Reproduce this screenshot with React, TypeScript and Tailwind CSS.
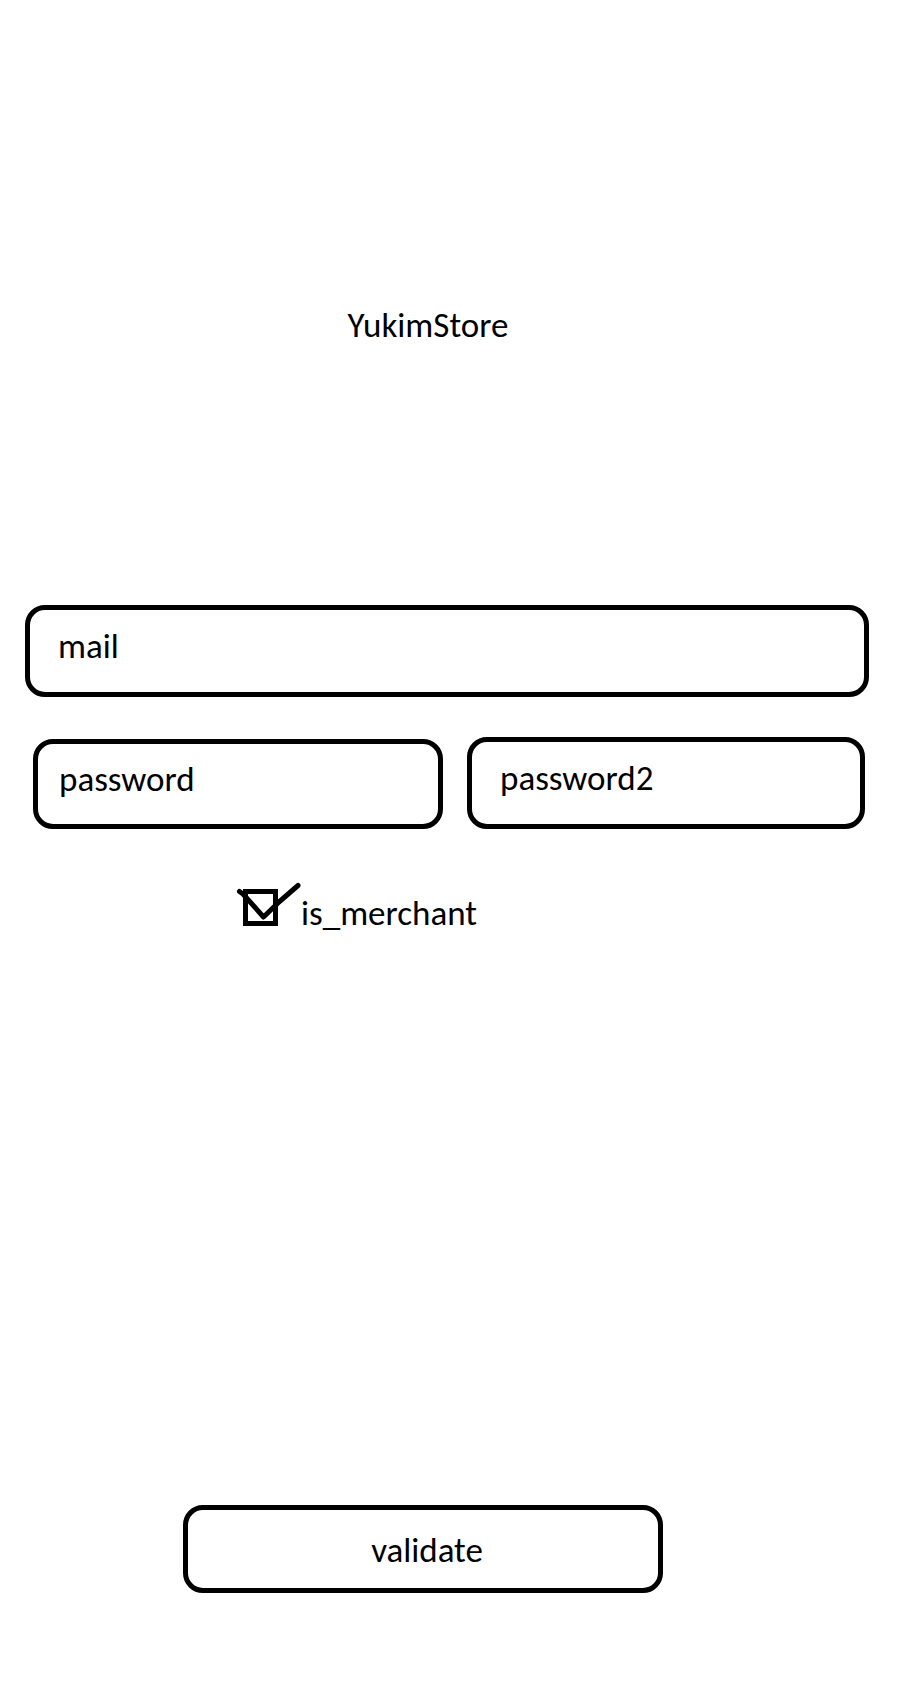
import { useState } from "react";
import type { InputHTMLAttributes } from "react";

function Field({ label, className = "", ...rest }: { label: string } & InputHTMLAttributes<HTMLInputElement>) {
  return (
    <input
      aria-label={label}
      placeholder={label}
      className={`w-full min-w-0 rounded-[20px] border-[5px] border-black bg-white pb-[10px] placeholder:text-black placeholder:opacity-100 focus:outline-none ${className}`}
      {...rest}
    />
  );
}

export default function App() {
  const [merchant, setMerchant] = useState(true);

  return (
    <main className="min-h-screen bg-white pt-[305px] pr-[37px] pb-[105px] pl-[25px] font-['Carlito','Calibri','Lato',sans-serif] text-[35px] leading-10 text-black">
      <h1 className="pr-[38px] text-center">YukimStore</h1>

      <form className="mt-[260px] flex flex-col" onSubmit={(e) => e.preventDefault()}>
        <Field label="mail" type="email" name="mail" className="h-[92px] pl-7" />

        <div className="mt-10 grid grid-cols-[410fr_398fr] items-end gap-6 pr-1 pl-2">
          <Field label="password" type="password" name="password" className="h-[90px] pl-[21px]" />
          <Field label="password2" type="password" name="password2" className="h-[92px] pl-7" />
        </div>

        <div className="mt-[60px] flex items-start pl-[218px]">
          <span className="relative h-[37px] w-[35px] shrink-0">
            <input
              id="is_merchant"
              type="checkbox"
              checked={merchant}
              onChange={(e) => setMerchant(e.target.checked)}
              className="block h-[37px] w-[35px] appearance-none border-[5px] border-black bg-white"
            />
            {merchant && (
              <svg
                className="pointer-events-none absolute -top-2 -left-2 h-[45px] w-[66px]"
                viewBox="0 0 66 45"
                fill="none"
                stroke="black"
                strokeWidth="5"
                strokeLinecap="round"
                strokeLinejoin="round"
                aria-hidden="true"
              >
                <path d="M4.5 10.5 L8 13 L28.500 36 L44 21 L63 4.500" />
              </svg>
            )}
          </span>
          <label htmlFor="is_merchant" className="pt-1 pl-[23px]">
            is_merchant
          </label>
        </div>

        <div className="mt-[572px] flex justify-center pr-12">
          <button type="submit" className="h-[88px] w-[480px] max-w-full rounded-[20px] border-[5px] border-black bg-white pt-[2px] pl-2">
            validate
          </button>
        </div>
      </form>
    </main>
  );
}
